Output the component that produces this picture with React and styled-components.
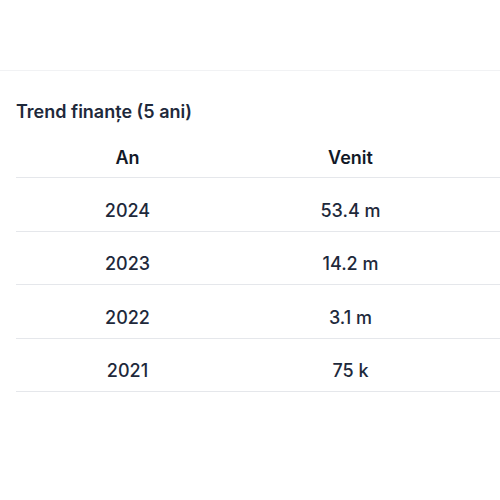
import React from 'react'
import styled, { createGlobalStyle } from 'styled-components'

const Global = createGlobalStyle`
  html, body {
    margin: 0;
    background: #fff;
    overflow: hidden;
  }
  body {
    font-family: Inter, "Noto Sans", sans-serif;
    color: #1f2937;
  }
`

const Section = styled.section`
  margin-top: 70px;
  border-top: 1px solid #f1f2f4;
  padding: 29px 0 0 16px;
`

const Title = styled.h2`
  margin: 0;
  font-size: 18px;
  line-height: 24px;
  font-weight: 600;
  color: #1e293b;
`

const Table = styled.table`
  width: 669px;
  margin-top: 13px;
  border-collapse: collapse;
  table-layout: fixed;
`

const Th = styled.th`
  height: 33px;
  padding: 0 0 7px;
  vertical-align: bottom;
  text-align: center;
  font-size: 18px;
  line-height: 24px;
  font-weight: 600;
  color: #111827;
  border-bottom: 1px solid #e5e7eb;
`

const Td = styled.td`
  height: 44.5px;
  padding: 0 0 8px;
  vertical-align: bottom;
  text-align: center;
  font-size: 18px;
  line-height: 24px;
  font-weight: 500;
  color: #1e293b;
  border-bottom: 1px solid #e5e7eb;
`

const rows = [
  ['2024', '53.4 m'],
  ['2023', '14.2 m'],
  ['2022', '3.1 m'],
  ['2021', '75 k'],
]

export default function App() {
  return (
    <>
      <Global />
      <Section>
        <Title>Trend finanțe (5 ani)</Title>
        <Table>
          <thead>
            <tr>
              <Th>An</Th>
              <Th>Venit</Th>
              <Th />
            </tr>
          </thead>
          <tbody>
            {rows.map(([year, value]) => (
              <tr key={year}>
                <Td>{year}</Td>
                <Td>{value}</Td>
                <Td />
              </tr>
            ))}
          </tbody>
        </Table>
      </Section>
    </>
  )
}
